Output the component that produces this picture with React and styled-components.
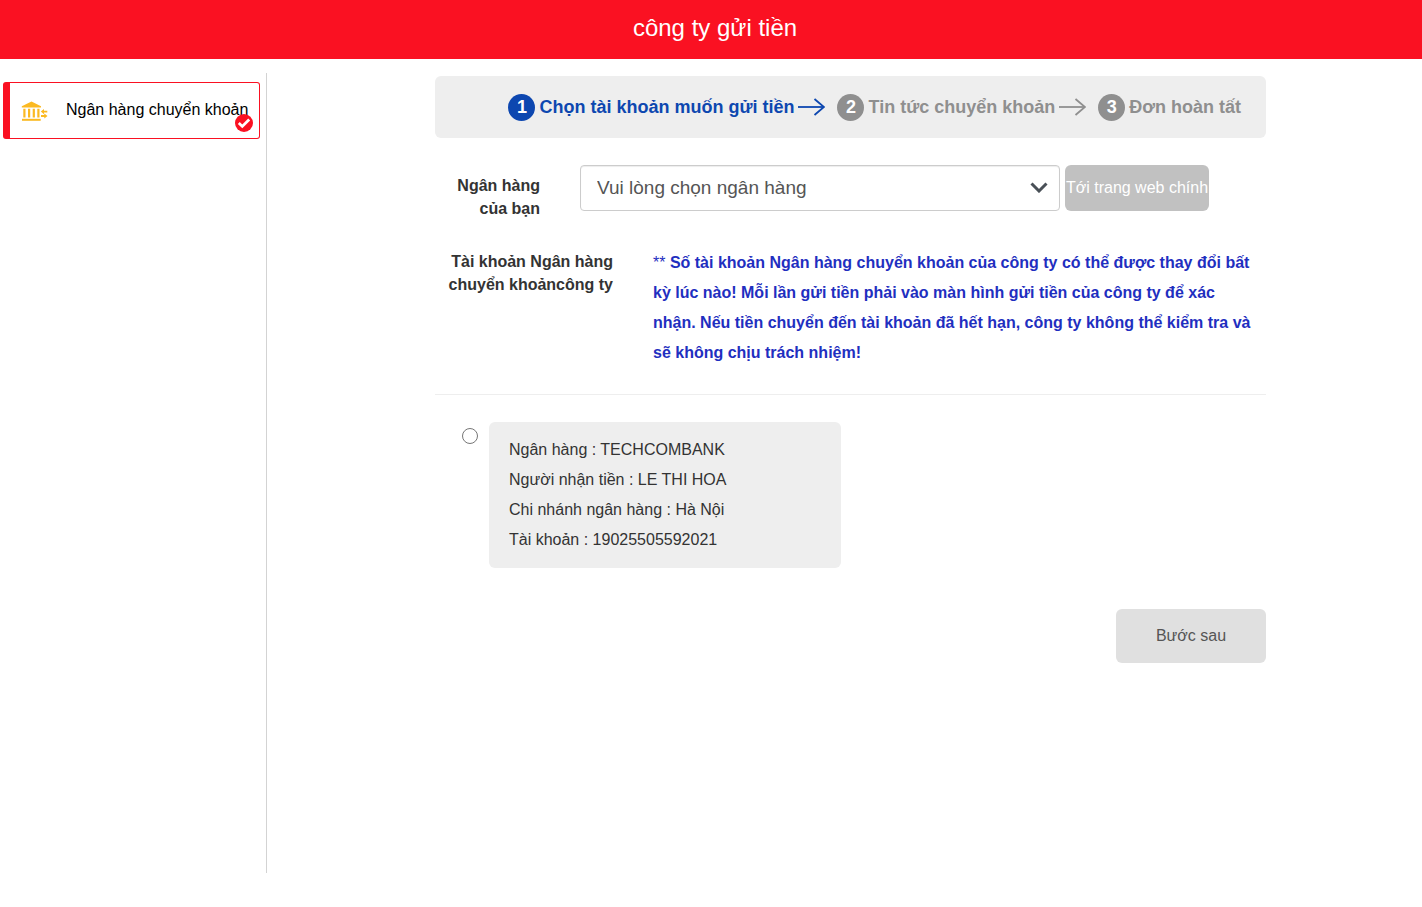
import React, { useState } from 'react';
import styled, { createGlobalStyle } from 'styled-components';

const GlobalStyle = createGlobalStyle`
  * {
    box-sizing: border-box;
  }

  body {
    margin: 0;
    background: #fff;
    color: #333;
    font-family: Arial, "Liberation Sans", sans-serif;
    font-size: 16px;
  }
`;

const Header = styled.header`
  padding: 12px 0 15px 8px;
  background: #fa1122;
  text-align: center;
`;

const Title = styled.h1`
  margin: 0;
  color: #fff;
  font-size: 24px;
  font-weight: 400;
  line-height: 32px;
`;

const Layout = styled.div`
  display: flex;
  margin-top: 14px;
`;

const Sidebar = styled.nav`
  flex: 0 0 267px;
  min-height: 800px;
  padding: 9px 6px 0 3px;
  border-right: 1px solid #d3d3d3;
`;

const MethodButton = styled.button`
  position: relative;
  display: flex;
  align-items: center;
  gap: 18px;
  width: 100%;
  height: 57px;
  padding: 0 0 0 11px;
  background: #fff;
  border: 1px solid #fa1122;
  border-left-width: 7px;
  border-radius: 3px;
  color: #000;
  font: inherit;
  white-space: nowrap;
  cursor: pointer;
`;

const MethodLabel = styled.span`
  padding-bottom: 2px;
`;

const CheckBadge = styled.svg`
  position: absolute;
  right: 6px;
  bottom: 6px;
`;

const Main = styled.main`
  flex: 1;
  display: flex;
  justify-content: center;
  padding: 3px 0 40px 12px;
`;

const Content = styled.form`
  width: 100%;
  max-width: 831px;
`;

const Steps = styled.ol`
  display: flex;
  align-items: center;
  justify-content: flex-end;
  margin: 0 0 27px;
  padding: 18px 25px 17px;
  background: #eee;
  border-radius: 6px;
  list-style: none;
`;

const Step = styled.li`
  display: flex;
  align-items: center;
  gap: 4px;
  margin-left: 12px;
  color: ${(props) => (props.$active ? '#0d47b0' : '#8f8f8f')};
  font-size: 18px;
  font-weight: 700;
  line-height: 27px;
  white-space: nowrap;

  svg {
    margin-bottom: 2px;
  }
`;

const StepNumber = styled.span`
  width: 27px;
  height: 27px;
  background: ${(props) => (props.$active ? '#0d47b0' : '#8f8f8f')};
  border-radius: 50%;
  color: #fff;
  text-align: center;
`;

const Row = styled.div`
  display: flex;
  align-items: flex-start;
  gap: ${(props) => props.$gap || '40px'};
`;

const FieldLabel = styled.label`
  flex: 0 0 105px;
  padding-top: 9px;
  font-weight: 700;
  line-height: 23px;
  text-align: right;
`;

const NoticeLabel = styled.div`
  flex: 0 0 178px;
  padding-top: 2px;
  font-weight: 700;
  line-height: 23px;
  text-align: right;
`;

const SelectGroup = styled.div`
  flex: 1;
  display: flex;
  gap: 5px;
`;

const SelectWrap = styled.div`
  position: relative;
  flex: 0 1 480px;

  svg {
    position: absolute;
    top: 17px;
    right: 12px;
    pointer-events: none;
  }
`;

const Select = styled.select`
  appearance: none;
  width: 100%;
  height: 46px;
  padding: 0 40px 2px 16px;
  background: #fff;
  border: 1px solid #ccc;
  border-radius: 4px;
  box-shadow: inset 0 1px 1px rgba(0, 0, 0, 0.075);
  color: #555;
  font-family: inherit;
  font-size: 19px;
`;

const SiteButton = styled.button`
  flex: 0 0 144px;
  height: 46px;
  padding: 0;
  background: #c1c1c1;
  border: none;
  border-radius: 6px;
  color: #fff;
  font: inherit;
  white-space: nowrap;
  cursor: pointer;
`;

const NoticeRow = styled(Row)`
  margin-top: 28px;
  padding-right: 8px;
  padding-bottom: 26px;
  border-bottom: 1px solid #eee;
`;

const Notice = styled.p`
  flex: 1;
  margin: 0;
  color: #1f2fc0;
  font-weight: 700;
  line-height: 30px;
`;

const Stars = styled.span`
  font-weight: 400;
`;

const AccountRow = styled(Row)`
  margin-top: 27px;
  padding-left: 27px;
`;

const Radio = styled.input`
  flex: none;
  width: 16px;
  height: 16px;
  margin: 6px 0 0;
`;

const AccountCard = styled.label`
  flex: 0 1 352px;
  padding: 13px 20px;
  background: #eee;
  border-radius: 6px;
  line-height: 30px;
`;

const AccountLine = styled.span`
  display: block;
`;

const Actions = styled.div`
  display: flex;
  justify-content: flex-end;
  margin-top: 41px;
`;

const NextButton = styled.button`
  width: 150px;
  height: 54px;
  padding: 0;
  background: #e0e0e0;
  border: none;
  border-radius: 6px;
  color: #555;
  font: inherit;
  cursor: pointer;
`;

const BankIcon = () => (
  <svg width="27" height="20" viewBox="0 0 27 20" fill="#fbb921" aria-hidden="true">
    <path d="M10.500 .5 20 5.300v1.200H.8V5.300z" />
    <path d="M2.300 7.800h2.200v8.700H2.300zM7 7.800h2.200v8.700H7zM11.700 7.800h2.200v8.700h-2.200zM16.300 7.800h2.200v8.700h-2.200z" />
    <path d="M1 17.800h18.700v2H1z" />
    <path d="M19.800 10.600 23 8v1.700h3.300v1.800H23v1.700zM26.500 15 23.300 12.400v1.700H20v1.800h3.300v1.700z" />
  </svg>
);

const ArrowIcon = () => (
  <svg width="27" height="18" viewBox="0 0 27 18" fill="none" stroke="currentColor" aria-hidden="true">
    <path d="M0 9h26" strokeWidth="1.800" />
    <path d="M16.500 1 26 9 16.500 17" strokeWidth="1.800" />
  </svg>
);

const steps = ['Chọn tài khoản muốn gửi tiền', 'Tin tức chuyển khoản', 'Đơn hoàn tất'];

const account = [
  ['Ngân hàng', 'TECHCOMBANK'],
  ['Người nhận tiền', 'LE THI HOA'],
  ['Chi nhánh ngân hàng', 'Hà Nội'],
  ['Tài khoản', '19025505592021'],
];

const App = () => {
  const [current] = useState(0);

  return (
    <>
      <GlobalStyle />
      <Header>
        <Title>công ty gửi tiền</Title>
      </Header>

      <Layout>
        <Sidebar>
          <MethodButton type="button">
            <BankIcon />
            <MethodLabel>Ngân hàng chuyển khoản</MethodLabel>
            <CheckBadge width="18" height="18" viewBox="0 0 18 18" aria-hidden="true">
              <circle cx="9" cy="9" r="9" fill="#fa1122" />
              <path d="M3.800 9 7.300 12.400 14.200 5.600" fill="none" stroke="#fff" strokeWidth="2.800" />
            </CheckBadge>
          </MethodButton>
        </Sidebar>

        <Main>
          <Content onSubmit={(e) => e.preventDefault()}>
            <Steps>
              {steps.map((label, i) => (
                <Step key={label} $active={i === current}>
                  <StepNumber $active={i === current}>{i + 1}</StepNumber>
                  <span>{label}</span>
                  {i < steps.length - 1 && <ArrowIcon />}
                </Step>
              ))}
            </Steps>

            <Row>
              <FieldLabel htmlFor="bank">Ngân hàng của bạn</FieldLabel>
              <SelectGroup>
                <SelectWrap>
                  <Select id="bank" defaultValue="">
                    <option value="">Vui lòng chọn ngân hàng</option>
                  </Select>
                  <svg width="18" height="11" viewBox="0 0 18 11" fill="none" aria-hidden="true">
                    <path d="M1.500 1.500 9 9 16.500 1.500" stroke="#495057" strokeWidth="3" />
                  </svg>
                </SelectWrap>
                <SiteButton type="button">Tới trang web chính</SiteButton>
              </SelectGroup>
            </Row>

            <NoticeRow>
              <NoticeLabel>Tài khoản Ngân hàng chuyển khoảncông ty</NoticeLabel>
              <Notice>
                <Stars>**</Stars> Số tài khoản Ngân hàng chuyển khoản của công ty có thể được thay
                đổi bất kỳ lúc nào! Mỗi lần gửi tiền phải vào màn hình gửi tiền của công ty để xác
                nhận. Nếu tiền chuyển đến tài khoản đã hết hạn, công ty không thể kiểm tra và sẽ
                không chịu trách nhiệm!
              </Notice>
            </NoticeRow>

            <AccountRow $gap="11px">
              <Radio type="radio" name="account" id="account-1" />
              <AccountCard htmlFor="account-1">
                {account.map(([name, value]) => (
                  <AccountLine key={name}>
                    {name} : {value}
                  </AccountLine>
                ))}
              </AccountCard>
            </AccountRow>

            <Actions>
              <NextButton type="submit">Bước sau</NextButton>
            </Actions>
          </Content>
        </Main>
      </Layout>
    </>
  );
};

export default App;
